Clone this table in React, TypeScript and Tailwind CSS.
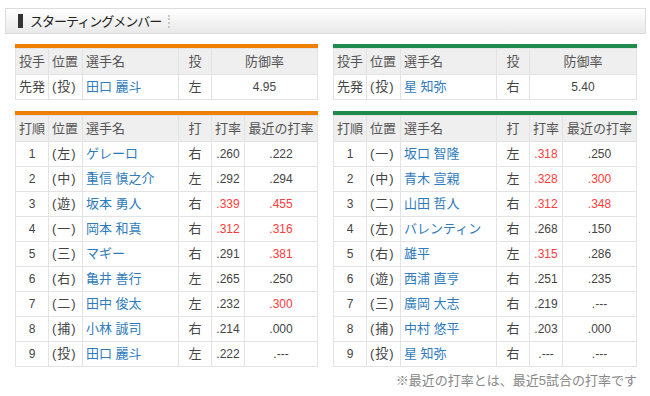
import React from 'react';

type Batter = [string, string, string, string, string, string];

const giants: Batter[] = [
  ['1', '左', 'ゲレーロ', '右', '.260', '.222'],
  ['2', '中', '重信 慎之介', '左', '.292', '.294'],
  ['3', '遊', '坂本 勇人', '右', '.339', '.455'],
  ['4', '一', '岡本 和真', '右', '.312', '.316'],
  ['5', '三', 'マギー', '右', '.291', '.381'],
  ['6', '右', '亀井 善行', '左', '.265', '.250'],
  ['7', '二', '田中 俊太', '左', '.232', '.300'],
  ['8', '捕', '小林 誠司', '右', '.214', '.000'],
  ['9', '投', '田口 麗斗', '左', '.222', '.---'],
];

const swallows: Batter[] = [
  ['1', '一', '坂口 智隆', '左', '.318', '.250'],
  ['2', '中', '青木 宣親', '左', '.328', '.300'],
  ['3', '二', '山田 哲人', '右', '.312', '.348'],
  ['4', '左', 'バレンティン', '右', '.268', '.150'],
  ['5', '右', '雄平', '左', '.315', '.286'],
  ['6', '遊', '西浦 直亨', '右', '.251', '.235'],
  ['7', '三', '廣岡 大志', '右', '.219', '.---'],
  ['8', '捕', '中村 悠平', '右', '.203', '.000'],
  ['9', '投', '星 知弥', '右', '.---', '.---'],
];

// .300 and up is shown in red
const isHot = (v: string) => !v.includes('-') && parseFloat(v) >= 0.3;

const th = 'border border-[#e3e3e3] bg-[#efefef] text-[#555] font-normal h-[26px] px-[3px]';
const td = 'border border-[#e3e3e3] bg-white h-[25px] px-[3px]';

const Pos: React.FC<{ p: string }> = ({ p }) => (
  <span className="whitespace-nowrap">
    <span className="mr-[1px]">(</span>
    {p}
    <span className="ml-[1px]">)</span>
  </span>
);

const PitcherTable: React.FC<{ color: string; name: string; hand: string; era: string }> = ({ color, name, hand, era }) => (
  <div className={`border-t-[4px] ${color}`}>
    <table className="w-full border-collapse table-fixed text-[13px]">
      <colgroup>
        <col className="w-[33px]" />
        <col className="w-[34px]" />
        <col className="w-[96px]" />
        <col className="w-[33px]" />
        <col />
      </colgroup>
      <thead>
        <tr>
          <th className={`${th} text-left`}>投手</th>
          <th className={`${th} text-left`}>位置</th>
          <th className={`${th} text-left`}>選手名</th>
          <th className={th}>投</th>
          <th className={th}>防御率</th>
        </tr>
      </thead>
      <tbody>
        <tr className="text-[#444]">
          <td className={`${td} text-left`}>先発</td>
          <td className={`${td} text-left`}><Pos p="投" /></td>
          <td className={`${td} text-left text-[#2f7bbd]`}>{name}</td>
          <td className={`${td} text-center`}>{hand}</td>
          <td className={`${td} text-center text-[12px]`}>{era}</td>
        </tr>
      </tbody>
    </table>
  </div>
);

const BattingTable: React.FC<{ color: string; rows: Batter[] }> = ({ color, rows }) => (
  <div className={`border-t-[4px] ${color}`}>
    <table className="w-full border-collapse table-fixed text-[13px]">
      <colgroup>
        <col className="w-[33px]" />
        <col className="w-[34px]" />
        <col className="w-[96px]" />
        <col className="w-[33px]" />
        <col className="w-[33px]" />
        <col />
      </colgroup>
      <thead>
        <tr>
          <th className={`${th} text-left whitespace-nowrap`}>打順</th>
          <th className={`${th} text-left whitespace-nowrap`}>位置</th>
          <th className={`${th} text-left`}>選手名</th>
          <th className={th}>打</th>
          <th className={`${th} whitespace-nowrap`}>打率</th>
          <th className={`${th} whitespace-nowrap`}>最近の打率</th>
        </tr>
      </thead>
      <tbody>
        {rows.map(([no, pos, name, hand, avg, recent]) => (
          <tr key={no} className="text-[#444]">
            <td className={`${td} text-center text-[12px]`}>{no}</td>
            <td className={`${td} text-left`}><Pos p={pos} /></td>
            <td className={`${td} text-left text-[#2f7bbd] whitespace-nowrap`}>{name}</td>
            <td className={`${td} text-center`}>{hand}</td>
            <td className={`${td} text-center text-[12px] ${isHot(avg) ? 'text-[#ff3b3b]' : ''}`}>{avg}</td>
            <td className={`${td} text-center text-[12px] ${isHot(recent) ? 'text-[#ff3b3b]' : ''}`}>{recent}</td>
          </tr>
        ))}
      </tbody>
    </table>
  </div>
);

export default function App() {
  return (
    <div
      className="w-[650px] h-[396px] bg-white overflow-hidden pt-[8px]"
      style={{ fontFamily: '"Liberation Sans", "Noto Sans CJK JP", sans-serif' }}
    >
      <div className="ml-[5px] w-[641px] h-[26px] border border-[#dcdcdc] bg-gradient-to-b from-white via-[#f4f4f4] to-[#e9e9e9] flex items-center pl-[12px]">
        <span className="w-[5px] h-[14px] bg-[#333]" />
        <span className="ml-[7px] text-[13px] tracking-[-1px] text-[#222] leading-none">スターティングメンバー</span>
        <span className="ml-[7px] h-[13px] border-l-2 border-dotted border-[#c8c8c8]" />
      </div>

      <div className="flex gap-[15px] pl-[15px] mt-[10px]">
        <div className="w-[303px]">
          <PitcherTable color="border-[#ee7f00]" name="田口 麗斗" hand="左" era="4.95" />
        </div>
        <div className="w-[304px]">
          <PitcherTable color="border-[#1e8a4c]" name="星 知弥" hand="右" era="5.40" />
        </div>
      </div>

      <div className="flex gap-[15px] pl-[15px] mt-[11px]">
        <div className="w-[303px]">
          <BattingTable color="border-[#ee7f00]" rows={giants} />
        </div>
        <div className="w-[304px]">
          <BattingTable color="border-[#1e8a4c]" rows={swallows} />
        </div>
      </div>

      <div className="w-[637px] text-right text-[13px] text-[#888] mt-[4px]">
        ※最近の打率とは、最近5試合の打率です
      </div>
    </div>
  );
}
